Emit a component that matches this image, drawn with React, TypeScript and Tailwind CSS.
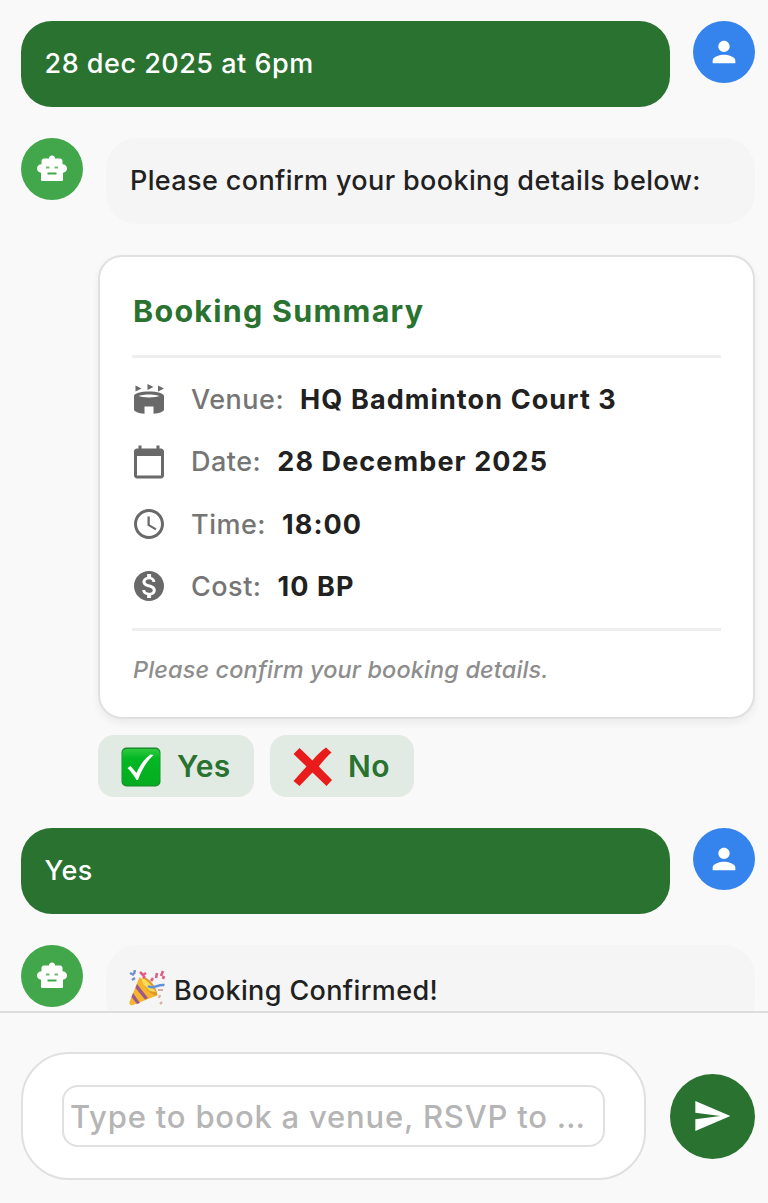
import React from "react";
import { MdStadium, MdCalendarToday, MdAccessTime, MdMonetizationOn, MdPerson, MdSend } from "react-icons/md";

function RobotIcon() {
  return (
    <svg viewBox="0 0 32 32" className="size-8" fill="none">
      <path d="M16 2.500C17.800 2.500 19 3.700 19 5.500H24C25.500 5.500 26.500 6.500 26.500 8V11.200C29 11.300 31 13 31 15.500S29 19.500 27 19.700V26.500C27 27.500 26.500 28 25.500 28H6.500C5.500 28 5 27.500 5 26.500V19.700C3 19.500 1 18 1 15.500S3 11.300 5.500 11.200V8C5.500 6.500 6.500 5.500 8 5.500H13C13 3.700 14.200 2.500 16 2.500Z" fill="currentColor" />
      <path d="M10 14.500H13.500M18.500 14.500H22" stroke="#42a74b" strokeOpacity="0.75" strokeWidth="2" />
      <path d="M11.500 20.500H20.500" stroke="#42a74b" strokeWidth="2" />
    </svg>
  );
}

function CheckEmoji() {
  return (
    <svg viewBox="0 0 40 40" className="relative top-px size-10 shrink-0">
      <defs>
        <linearGradient id="check-fill" x1="0" y1="0" x2="0" y2="1">
          <stop offset="0" stopColor="#2fca3f" />
          <stop offset="0.25" stopColor="#04b824" />
          <stop offset="1" stopColor="#05ab1f" />
        </linearGradient>
      </defs>
      <rect x="0.5" y="0.5" width="39" height="39" rx="5" fill="#178a2b" />
      <rect x="1.2" y="2" width="37.6" height="36.4" rx="4.5" fill="url(#check-fill)" />
      <path d="M6.500 21 9.500 19 15.500 26C19 18 23.500 11.500 29.500 7.500L32.500 8C25.500 14.500 20.500 23 17 33H15.500C13 28.500 10 24.500 6.500 21Z" fill="#fff" />
    </svg>
  );
}

function CrossEmoji() {
  return (
    <svg viewBox="0 0 40 40" className="relative top-px size-10 shrink-0">
      <path d="M6.500 1 19.500 13.500C23.500 8.500 28 4 33 0.500L38.500 5.500C34 9.500 29.500 14.500 25.800 19.500L39 33 33.500 39 19.500 25.500 6.500 39 0.500 34 13.500 19.500 0.500 7Z" fill="#e91c1b" />
    </svg>
  );
}

function PartyEmoji() {
  return (
    <svg viewBox="0 0 36 36" className="relative -top-0.5 -left-px size-9 shrink-0" fill="none">
      <path d="M10.500 7 0.500 32C0 34.500 1.500 36 4 35L28 25.500Z" fill="#f3b62d" />
      <path d="M8 14 19 28 16 29.500 6.500 18Z M4 23 11 33 8 34 2.500 27Z" fill="#a0568f" />
      <path d="M15 7C21 9 27 16 28.500 25C25 28 14 17 12 9Z" fill="#e39a25" />
      <path d="M12 8C18 9 21 14 27 22L21 21 14 14Z" fill="#fadb5a" />
      <path d="M19 16C24 20 28 14 35.500 15" stroke="#5d91dc" strokeWidth="2.500" />
      <path d="M1 3 5 5M3 10 6 8M6 0 5 4" stroke="#6f91cf" strokeWidth="2.500" />
      <path d="M11 2 14 5 17 3M14 8 16 6M22 11 24 8M27 8 28 3M32 6 34 1M34 9 35 6" stroke="#df5e86" strokeWidth="2.600" />
      <path d="M29 20 34 20M31 25 30 28M33 32 31 34" stroke="#dcaaa0" strokeWidth="2.200" />
    </svg>
  );
}

function UserMessage({ text }: { text: string }) {
  return (
    <div className="flex items-start gap-[23px] pl-[21px]">
      <div className="flex h-[86px] w-[649px] items-center rounded-[31px] bg-[#297230] pr-6 pl-[23.500px] text-[27px] leading-[42px] font-[450] tracking-[0.5px] text-white">
        {text}
      </div>
      <div className="flex size-[62px] items-center justify-center rounded-full bg-[#3584ed] text-white">
        <MdPerson size={34} />
      </div>
    </div>
  );
}

function BotMessage({ children }: { children: React.ReactNode }) {
  return (
    <div className="flex items-start gap-[23px] pl-[21px]">
      <div className="flex size-[62px] items-center justify-center rounded-full bg-[#42a74b] text-white">
        <RobotIcon />
      </div>
      <div className="flex h-[86px] w-[649px] items-center rounded-[31px] bg-[#f5f5f5] px-6 text-[27px] leading-[42px] font-[450] tracking-[0.370px] text-[#212121]">
        {children}
      </div>
    </div>
  );
}

const details = [
  { label: "Venue:", value: "HQ Badminton Court 3", Icon: MdStadium },
  { label: "Date:", value: "28 December 2025", Icon: MdCalendarToday },
  { label: "Time:", value: "18:00", Icon: MdAccessTime },
  { label: "Cost:", value: "10 BP", Icon: MdMonetizationOn },
];

export default function App() {
  return (
    <div className="flex h-[1203px] w-[768px] flex-col overflow-hidden bg-[#f9f9f9] font-['Inter','Noto_Sans',sans-serif]">
      <main className="h-[1011px] shrink-0 overflow-hidden pt-[20.500px]">
        <UserMessage text="28 dec 2025 at 6pm" />
        <div className="mt-[31px]">
          <BotMessage>Please confirm your booking details below:</BotMessage>
        </div>
        <section className="mt-[31.500px] ml-[98px] h-[464px] w-[657px] rounded-[24px] border-2 border-[#e0e0e0] bg-white px-8 pt-[31px] shadow-[0_4px_8px_rgba(0,0,0,0.06)]">
          <h2 className="h-[45px] pl-px text-[30.500px] leading-[45px] font-bold tracking-[1.250px] text-[#297230]">Booking Summary</h2>
          <hr className="mt-[22px] border-0 border-t-[3px] border-[#eeeeee]" />
          <dl className="mt-[11px]">
            {details.map(({ label, value, Icon }) => (
              <div key={label} className="flex h-[62.400px] items-center text-[27px]">
                <Icon size={36} className="relative -left-px -top-px text-[#696969]" />
                <dt className="ml-[23px] font-medium tracking-[0.5px] text-[#757575]">{label}</dt>
                <dd className="ml-4 font-bold tracking-[1.100px] text-[#212121]">{value}</dd>
              </div>
            ))}
          </dl>
          <hr className="mt-[9px] border-0 border-t-[3px] border-[#eeeeee]" />
          <p className="mt-[21px] pl-px text-[23.500px] leading-[36px] font-medium tracking-[0.120px] text-[#8d8d8d] italic">Please confirm your booking details.</p>
        </section>
        <div className="mt-[16px] flex gap-4 pl-[98px] text-[30px] font-semibold text-[#297230]">
          <button className="flex h-[62px] w-[156px] items-center gap-4 rounded-[16px] bg-[#e2ebe3] pl-[23px] tracking-[0.300px]">
            <CheckEmoji />
            Yes
          </button>
          <button className="flex h-[62px] w-[144px] items-center gap-[15px] rounded-[16px] bg-[#e2ebe3] pl-[23px] tracking-[0.500px]">
            <CrossEmoji />
            No
          </button>
        </div>
        <div className="mt-[31px]">
          <UserMessage text="Yes" />
        </div>
        <div className="mt-[31px]">
          <BotMessage>
            <span className="flex items-center pt-1">
              <PartyEmoji />
              <span className="ml-2 pt-0.5">Booking Confirmed!</span>
            </span>
          </BotMessage>
        </div>
      </main>
      <footer className="flex grow items-center gap-6 border-t-2 border-[#dddddd] pt-4 pl-[21px]">
        <div className="flex h-[128px] w-[625px] items-center rounded-[48px] border-2 border-[#e0e0e0] bg-white px-[39px]">
          <input
            type="text"
            placeholder="Type to book a venue, RSVP to …"
            className="h-[62px] w-full rounded-[16px] border-2 border-[#e0e0e0] px-[6px] text-[31px] font-[450] tracking-[0.800px] outline-none placeholder:text-[#b5b5b5]"
          />
        </div>
        <button className="flex size-[85px] items-center justify-center rounded-full bg-[#297230] pr-0.5 text-white">
          <MdSend size={40} />
        </button>
      </footer>
    </div>
  );
}
